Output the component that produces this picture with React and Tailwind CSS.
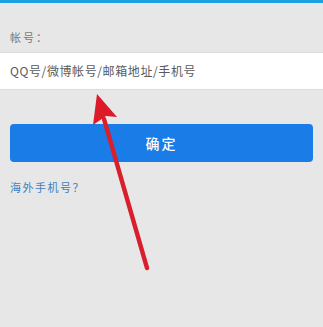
export default function App() {
  const font = { fontFamily: '"Noto Sans CJK SC", "Liberation Sans", sans-serif' }

  return (
    <div className="relative w-[323px] h-[327px] overflow-hidden bg-[#e7e7e7]" style={font}>
      {/* top bar */}
      <div className="h-[3px] bg-[#1e9ee3]" />

      {/* label */}
      <div className="px-[10px] pt-[27px] pb-[8px] text-[11px] leading-[14px] tracking-[2px] text-[#7a7a7a]">帐号：</div>

      {/* input */}
      <div className="h-[38px] bg-white border-y border-[#dcdcdc] flex items-center px-[10px]">
        <span className="text-[12px] tracking-[0.6px] text-[#5a5a5a]">QQ号/微博帐号/邮箱地址/手机号</span>
      </div>

      {/* submit */}
      <div className="px-[10px] pt-[34px]">
        <button className="w-full h-[38px] rounded-[4px] bg-[#1a7ce6] text-white text-[14px] tracking-[2px] font-medium">
          确定
        </button>
      </div>

      {/* overseas */}
      <div className="px-[10px] pt-[17px] text-[11px] tracking-[1.5px] text-[#3d7fc1]">海外手机号？</div>

      {/* red arrow annotation */}
      <svg className="absolute left-0 top-0 pointer-events-none" width="323" height="327" viewBox="0 0 323 327">
        <line x1="147" y1="268" x2="104" y2="119" stroke="#d91f2b" strokeWidth="4.5" strokeLinecap="round" />
        <polygon points="97,94 117,117 106,116 93,125" fill="#dc1a28" />
      </svg>
    </div>
  )
}
